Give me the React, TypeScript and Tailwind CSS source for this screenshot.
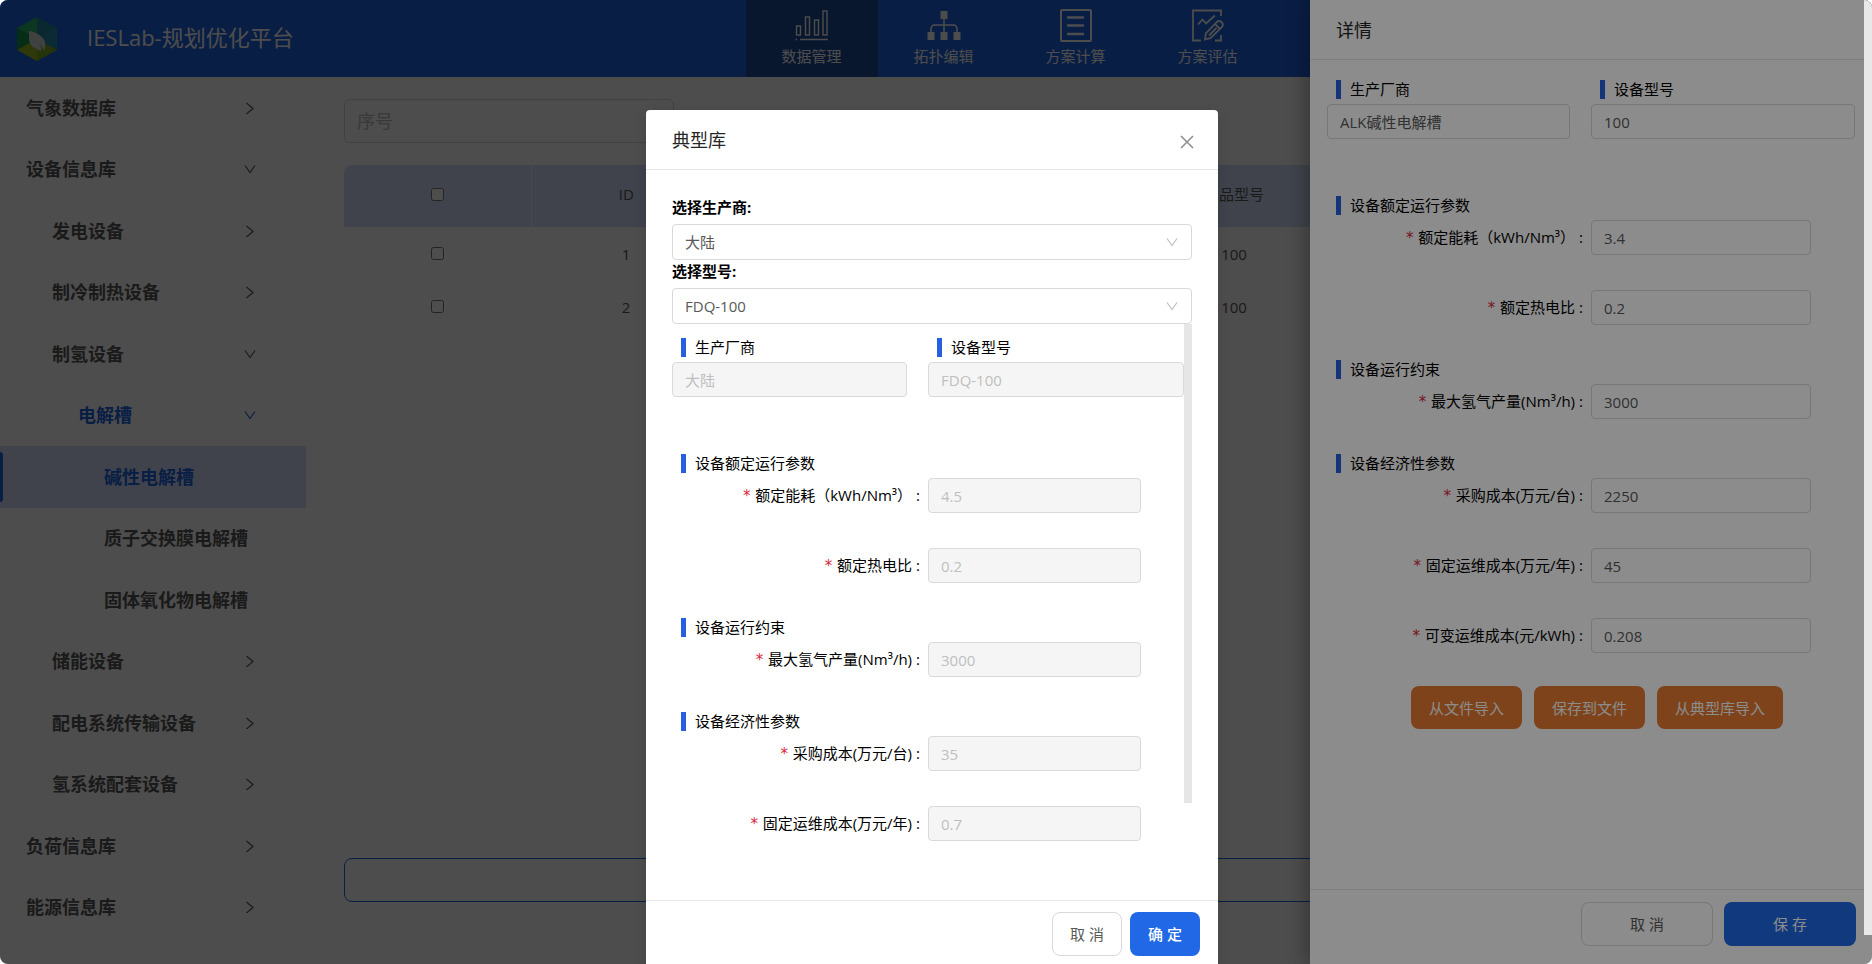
import { useId, useState, type ReactNode } from 'react'
import clsx from 'clsx'

type MenuItem = {
    name: string
    level: 1 | 2 | 3 | 4
    state?: 'open' | 'closed'
    selected?: boolean
    active?: boolean
}

type Field = { label: string; value: string }
type Section = { title: string; fields: Field[] }

const menu: MenuItem[] = [
    { name: '气象数据库', level: 1, state: 'closed' },
    { name: '设备信息库', level: 1, state: 'open' },
    { name: '发电设备', level: 2, state: 'closed' },
    { name: '制冷制热设备', level: 2, state: 'closed' },
    { name: '制氢设备', level: 2, state: 'open' },
    { name: '电解槽', level: 3, state: 'open', active: true },
    { name: '碱性电解槽', level: 4, active: true, selected: true },
    { name: '质子交换膜电解槽', level: 4 },
    { name: '固体氧化物电解槽', level: 4 },
    { name: '储能设备', level: 2, state: 'closed' },
    { name: '配电系统传输设备', level: 2, state: 'closed' },
    { name: '氢系统配套设备', level: 2, state: 'closed' },
    { name: '负荷信息库', level: 1, state: 'closed' },
    { name: '能源信息库', level: 1, state: 'closed' }
]

const indent = {
    1: 'pl-[26px]',
    2: 'pl-[52px]',
    3: 'pl-[78px]',
    4: 'pl-[104px]'
}

const rows = [
    { id: 1, vendor: 'ALK碱性电解槽', model: '100' },
    { id: 2, vendor: 'ALK碱性电解槽', model: '100' }
]

const drawerSections: Section[] = [
    {
        title: '设备额定运行参数',
        fields: [
            { label: '额定能耗（kWh/Nm³）', value: '3.4' },
            { label: '额定热电比', value: '0.2' }
        ]
    },
    { title: '设备运行约束', fields: [{ label: '最大氢气产量(Nm³/h)', value: '3000' }] },
    {
        title: '设备经济性参数',
        fields: [
            { label: '采购成本(万元/台)', value: '2250' },
            { label: '固定运维成本(万元/年)', value: '45' },
            { label: '可变运维成本(元/kWh)', value: '0.208' }
        ]
    }
]

const modalSections: Section[] = [
    {
        title: '设备额定运行参数',
        fields: [
            { label: '额定能耗（kWh/Nm³）', value: '4.5' },
            { label: '额定热电比', value: '0.2' }
        ]
    },
    { title: '设备运行约束', fields: [{ label: '最大氢气产量(Nm³/h)', value: '3000' }] },
    {
        title: '设备经济性参数',
        fields: [
            { label: '采购成本(万元/台)', value: '35' },
            { label: '固定运维成本(万元/年)', value: '0.7' }
        ]
    }
]

function Logo() {
    return (
        <svg className="h-11 w-10" viewBox="0 0 40 44">
            <path d="M20 0 L40 11 L20 22 Z" fill="#1f86a0" />
            <path d="M20 0 L0 11 L20 22 Z" fill="#25b46a" />
            <path d="M0 11 L0 33 L20 22 Z" fill="#149a4a" />
            <path d="M40 11 L40 33 L20 22 Z" fill="#2a8fae" />
            <path d="M0 33 L20 44 L20 22 Z" fill="#9aba1c" />
            <path d="M40 33 L20 44 L20 22 Z" fill="#7fae24" />
            <path d="M12 14 C18 14 26 19 28 25 C28.5 28 28 32 27 34 C26 31 24.5 28.5 22 27 C24 29.5 25 32 24 34 C17 32 12 27 12 22 Z" fill="#d3dcd8" />
        </svg>
    )
}

function BarsIcon() {
    return (
        <svg className="h-[34px] w-[34px]" viewBox="0 0 34 34" fill="none" stroke="currentColor" strokeWidth="1.4">
            <rect x="1.5" y="18" width="4" height="9" />
            <rect x="10.5" y="9" width="4" height="18" />
            <rect x="19.5" y="12" width="4" height="15" />
            <rect x="28" y="3" width="4" height="24" />
            <path d="M0.5 31.5 h1.6 M5 31.5 h28" />
        </svg>
    )
}

function TopologyIcon() {
    return (
        <svg className="h-[34px] w-[34px]" viewBox="0 0 34 34" fill="none" stroke="currentColor" strokeWidth="1.5">
            <g fill="currentColor" stroke="none">
                <rect x="13.5" y="3" width="7" height="8" />
                <rect x="0.5" y="24" width="7" height="8" />
                <rect x="13.5" y="24" width="7" height="8" />
                <rect x="26.5" y="24" width="7" height="8" />
            </g>
            <path d="M17 10 v15 M4 25 v-4 q0 -4 4 -4 h18 q4 0 4 4 v4" />
        </svg>
    )
}

function ListIcon() {
    return (
        <svg className="h-[34px] w-[34px]" viewBox="0 0 34 34" fill="none" stroke="currentColor" strokeWidth="2">
            <rect x="2" y="2" width="30" height="31" rx="1" />
            <path d="M9 9.5 h15 M9 17.5 h15 M9 26 h15" strokeWidth="2.4" strokeLinecap="round" />
        </svg>
    )
}

function ReportIcon() {
    return (
        <svg className="h-[34px] w-[34px]" viewBox="0 0 34 34" fill="none" stroke="currentColor" strokeWidth="1.8">
            <path d="M30 8 V2.5 H2 V32.5 H10 M30 27 V32.5 H24" />
            <path d="M7 16.5 L11.5 11.5 L15 15.5 L24 7.5" />
            <path d="M15 31 L14 31.5 L14.8 25.5 L26 13.8 Q28 12.2 30.4 14 Q33 16.5 31 19 L19.5 30.2 Z M24 16 L29 21 M18 27.5 L25.5 19.8" />
        </svg>
    )
}

const navItems = [
    { name: '数据管理', icon: <BarsIcon />, current: true },
    { name: '拓扑编辑', icon: <TopologyIcon /> },
    { name: '方案计算', icon: <ListIcon /> },
    { name: '方案评估', icon: <ReportIcon /> }
]

function Chevron({ open, className }: { open?: boolean; className?: string }) {
    return (
        <svg className={clsx('h-3 w-3', className)} viewBox="0 0 12 12" fill="none" stroke="currentColor" strokeWidth="1.2">
            <path d={open ? 'M1 2.5 L6 9.5 L11 2.5' : 'M2.5 1 L9 6.5 L2.5 12'} />
        </svg>
    )
}

function Header() {
    return (
        <header className="flex h-[77px] shrink-0 bg-[#2165e4] pr-2 text-white">
            <div className="flex w-2/5 shrink-0 items-center gap-[30px] pl-[17px]">
                <Logo />
                <h1 className="pb-1 text-[22px] leading-8">IESLab-规划优化平台</h1>
            </div>
            <nav className="flex">
                {navItems.map((item) => (
                    <a
                        key={item.name}
                        href="#"
                        className={clsx('flex w-[132px] flex-col items-center gap-0.5 pt-2 text-[15px] leading-6', item.current && 'bg-[#1c4c9c]')}
                    >
                        {item.icon}
                        {item.name}
                    </a>
                ))}
            </nav>
        </header>
    )
}

function Sidebar() {
    return (
        <aside className="flex w-[306px] shrink-0 flex-col pb-[26px]">
            {menu.map((item) => (
                <a
                    key={item.name}
                    href="#"
                    className={clsx(
                        'flex flex-1 items-center justify-between pr-[50px] text-lg leading-6 font-bold',
                        indent[item.level],
                        item.active ? 'text-[#2165e4]' : 'text-[#595959]',
                        item.selected && 'relative bg-[#d6e1fb]'
                    )}
                >
                    {item.selected && <span className="absolute inset-y-1.5 left-0 w-[3px] rounded-r bg-[#2165e4]" />}
                    {item.name}
                    {item.state && <Chevron open={item.state === 'open'} />}
                </a>
            ))}
        </aside>
    )
}

function DataTable() {
    return (
        <table className="w-full table-fixed text-center text-[15px] leading-6 text-[#595959]">
            <colgroup>
                <col className="w-[187px]" />
                <col className="w-[190px]" />
                <col className="w-[342px]" />
                <col className="w-[342px]" />
                <col />
            </colgroup>
            <thead>
                <tr className="h-[62px] bg-[#d6e1fb]">
                    <th className="rounded-tl-lg border-r border-white/60 pb-1">
                        <input type="checkbox" aria-label="全选" className="mx-auto block h-[13px] w-[13px]" />
                    </th>
                    <th className="pb-1 font-normal">ID</th>
                    <th className="pb-1 font-normal">生产厂商</th>
                    <th className="pb-1 font-normal">产品型号</th>
                    <th className="rounded-tr-lg pb-1 font-normal">操作</th>
                </tr>
            </thead>
            <tbody>
                {rows.map((row) => (
                    <tr key={row.id} className="h-[53px]">
                        <td>
                            <input type="checkbox" aria-label={`选择 ${row.id}`} className="mx-auto block h-[13px] w-[13px]" />
                        </td>
                        <td>{row.id}</td>
                        <td>{row.vendor}</td>
                        <td>{row.model}</td>
                        <td>编辑</td>
                    </tr>
                ))}
            </tbody>
        </table>
    )
}

function Marker({ children, htmlFor }: { children: ReactNode; htmlFor?: string }) {
    const Tag = htmlFor ? 'label' : 'h3'
    return (
        <Tag htmlFor={htmlFor} className="mb-[5px] flex h-[19px] items-center gap-[9px] pl-[9px] text-[15px] leading-[19px] text-black">
            <span className="h-full w-[5px] bg-[#285fdf]" />
            {children}
        </Tag>
    )
}

const controlStyle =
    'rounded border border-[#d9d9d9] bg-white px-3 text-[15px] leading-6 text-[#595959] disabled:bg-[#f5f5f5] disabled:text-[#bfbfbf]'

function TopField({ label, value, disabled }: Field & { disabled?: boolean }) {
    const id = useId()
    return (
        <div>
            <Marker htmlFor={id}>{label}</Marker>
            <input id={id} defaultValue={value} disabled={disabled} className={clsx(controlStyle, 'h-[35px] w-full')} />
        </div>
    )
}

function FieldRow({ label, value, disabled }: Field & { disabled?: boolean }) {
    const id = useId()
    return (
        <div className="mb-[35px] grid grid-cols-2 items-center">
            <label htmlFor={id} className="pr-2 text-right text-[15px] leading-6 whitespace-nowrap text-black">
                <span className="mr-1 font-['DejaVu_Sans_Mono',monospace] text-[#d9253c]">*</span>
                {label}
                <span className="ml-1">:</span>
            </label>
            <input id={id} defaultValue={value} disabled={disabled} className={clsx(controlStyle, 'h-[35px] w-5/6')} />
        </div>
    )
}

function DeviceForm({ vendor, model, sections, disabled }: { vendor: string; model: string; sections: Section[]; disabled?: boolean }) {
    return (
        <>
            <div className="mb-[57px] grid grid-cols-2">
                <div className="pr-[21px]">
                    <TopField label="生产厂商" value={vendor} disabled={disabled} />
                </div>
                <TopField label="设备型号" value={model} disabled={disabled} />
            </div>
            {sections.map((section) => (
                <section key={section.title}>
                    <Marker>{section.title}</Marker>
                    {section.fields.map((field) => (
                        <FieldRow key={field.label} {...field} disabled={disabled} />
                    ))}
                </section>
            ))}
        </>
    )
}

function Drawer() {
    return (
        <aside className="absolute inset-y-0 right-0 flex w-[562px] flex-col bg-white shadow-[-6px_0_16px_rgba(0,0,0,0.25)]">
            <h2 className="h-[60px] shrink-0 border-b border-[#e8e8e8] pl-[26px] text-lg leading-[60px] text-[#262626]">详情</h2>
            <div className="flex-1 px-[17px] pt-5">
                <DeviceForm vendor="ALK碱性电解槽" model="100" sections={drawerSections} />
                <div className="-mt-0.5 flex justify-center gap-3 pl-3 text-[15px] leading-6 text-white">
                    {['从文件导入', '保存到文件', '从典型库导入'].map((name) => (
                        <button key={name} className="h-[43px] rounded-lg bg-[#e57a30] px-[18px]">
                            {name}
                        </button>
                    ))}
                </div>
            </div>
            <div className="flex h-[75px] shrink-0 justify-end gap-[11px] border-t border-[#e8e8e8] px-4 pt-3 text-[15px] leading-6">
                <button className="h-11 w-[132px] rounded-lg border border-[#d9d9d9] text-[#595959]">取 消</button>
                <button className="h-11 w-[132px] rounded-lg bg-[#2068e6] text-white">保 存</button>
            </div>
        </aside>
    )
}

function SelectBox({ label, value, onChange, options }: { label: string; value: string; onChange: (v: string) => void; options: string[] }) {
    const id = useId()
    return (
        <div>
            <label htmlFor={id} className="block pb-1.5 text-[15px] leading-[22px] font-bold text-black">
                {label}
            </label>
            <div className="relative">
                <select
                    id={id}
                    value={value}
                    onChange={(e) => onChange(e.target.value)}
                    className={clsx(controlStyle, 'block h-9 w-full appearance-none')}
                >
                    {options.map((option) => (
                        <option key={option}>{option}</option>
                    ))}
                </select>
                <Chevron open className="pointer-events-none absolute top-3 right-3.5 text-[#bfbfbf]" />
            </div>
        </div>
    )
}

function LibraryModal() {
    const [vendor, setVendor] = useState('大陆')
    const [model, setModel] = useState('FDQ-100')

    return (
        <div role="dialog" aria-label="典型库" className="w-[572px] rounded bg-white shadow-[0_4px_12px_rgba(0,0,0,0.15)]">
            <div className="flex h-[60px] items-center justify-between border-b border-[#e8e8e8] pr-6 pl-[26px]">
                <h2 className="text-lg leading-6 text-[#262626]">典型库</h2>
                <button aria-label="关闭" className="pt-1 text-[#8c8c8c]">
                    <svg className="h-3.5 w-3.5" viewBox="0 0 14 14" fill="none" stroke="currentColor" strokeWidth="1.5">
                        <path d="M1 1 L13 13 M13 1 L1 13" />
                    </svg>
                </button>
            </div>
            <div className="px-[26px] pt-[26px] pb-6">
                <SelectBox label="选择生产商:" value={vendor} onChange={setVendor} options={['大陆']} />
                <SelectBox label="选择型号:" value={model} onChange={setModel} options={['FDQ-100']} />
                <div className="flex">
                    <div className="flex-1 pt-[14px]">
                        <DeviceForm vendor={vendor} model={model} sections={modalSections} disabled />
                    </div>
                    {/* scroll thumb of the form */}
                    <div className="h-[479px] w-2 bg-[#e6e6e6]" />
                </div>
            </div>
            <div className="flex justify-end gap-2 border-t border-[#e8e8e8] px-[18px] py-[11px] text-[15px] leading-6">
                <button className="h-11 w-[70px] rounded-lg border border-[#d9d9d9] text-[#595959]">取 消</button>
                <button className="h-11 w-[70px] rounded-lg bg-[#2068e6] font-medium text-white">确 定</button>
            </div>
        </div>
    )
}

export default function App() {
    return (
        <div className="relative flex h-screen flex-col overflow-hidden rounded-lg bg-white font-['Open_Sans','Noto_Sans_CJK_SC',sans-serif]">
            <Header />
            <div className="flex min-h-0 flex-1">
                <Sidebar />
                <main className="flex flex-1 flex-col pt-[22px] pr-8 pb-[62px] pl-[38px]">
                    <input
                        placeholder="序号"
                        aria-label="序号"
                        className="h-11 w-[330px] rounded-md border border-[#d9d9d9] px-3 text-lg leading-6 placeholder:text-[#bfbfbf]"
                    />
                    <div className="flex-1 pt-[22px]">
                        <DataTable />
                    </div>
                    <button aria-label="添加" className="h-11 rounded-lg border border-[#2165e4]" />
                </main>
            </div>

            <div className="absolute inset-0 bg-black/45" />
            <Drawer />

            {/* modal layer with its own page scroll thumb */}
            <div className="absolute inset-0 flex items-start bg-black/45">
                <div className="flex flex-1 justify-center pt-[110px]">
                    <LibraryModal />
                </div>
                <div className="h-[97%] w-2 bg-[#e8e8e8]" />
            </div>
        </div>
    )
}
